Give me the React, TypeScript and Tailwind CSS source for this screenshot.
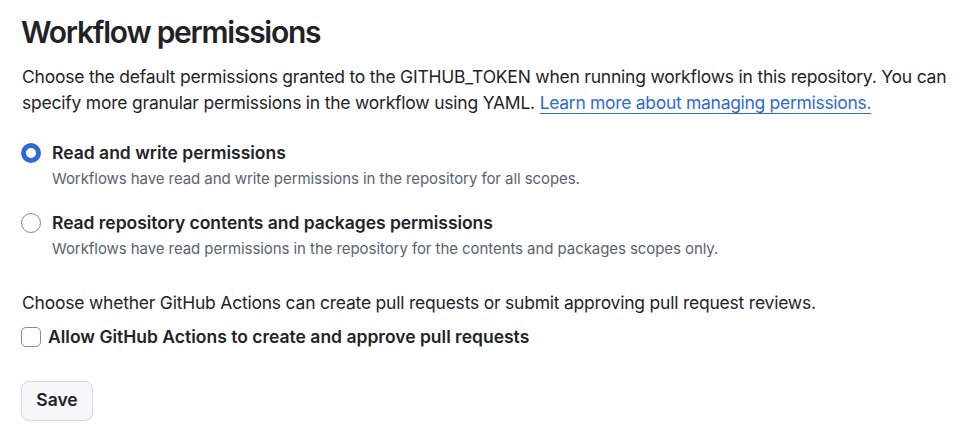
import React from "react";

export default function App() {
  return (
    <div className="min-h-screen bg-white pl-[21px] pr-4 pt-[14px] text-[#1f2328] font-['Inter','Noto_Sans',sans-serif]">
      <h2 className="text-[30px] leading-[37.5px] font-semibold tracking-[-1.25px]">Workflow permissions</h2>
      <p className="mt-[12px] text-[17.5px] leading-[26.25px] pl-[1px] tracking-[-0.22px] whitespace-nowrap">
        Choose the default permissions granted to the GITHUB_TOKEN when running workflows in this repository. You can
        <br />
        specify more granular permissions in the workflow using YAML.{" "}
        <a href="#" className="text-[#2f6ad6] underline underline-offset-[4px] decoration-[1.25px] tracking-[-0.3px]">
          Learn more about managing permissions.
        </a>
      </p>

      <div className="mt-[24px]">
        <div className="flex items-center">
          <span className="w-[20px] h-[20px] rounded-full border-[5.5px] border-[#2f6ad6] bg-white shrink-0" />
          <span className="ml-[11px] text-[17.5px] leading-[26.25px] font-semibold">Read and write permissions</span>
        </div>
        <div className="mt-[2px] pl-[31px] text-[15px] leading-[22.5px] text-[#59636e] tracking-[-0.07px]">
          Workflows have read and write permissions in the repository for all scopes.
        </div>
      </div>

      <div className="mt-[19px]">
        <div className="flex items-center">
          <span className="w-[20px] h-[20px] rounded-full border-[1.25px] border-[#818b98] bg-white shrink-0" />
          <span className="ml-[11px] text-[17.5px] leading-[26.25px] font-semibold tracking-[-0.05px]">
            Read repository contents and packages permissions
          </span>
        </div>
        <div className="mt-[2px] pl-[31px] text-[15px] leading-[22.5px] text-[#59636e] tracking-[-0.07px]">
          Workflows have read permissions in the repository for the contents and packages scopes only.
        </div>
      </div>

      <p className="mt-[29.5px] text-[17.5px] leading-[26.25px] pl-[1px] tracking-[-0.22px]">
        Choose whether GitHub Actions can create pull requests or submit approving pull request reviews.
      </p>

      <div className="mt-[8px] flex items-center">
        <span className="w-[20px] h-[20px] rounded-[5px] border-[1.25px] border-[#818b98] bg-white shrink-0" />
        <span className="ml-[7px] text-[17.5px] leading-[26.25px] font-semibold">
          Allow GitHub Actions to create and approve pull requests
        </span>
      </div>

      <button className="mt-[30px] w-[72px] h-[40px] rounded-[8px] border border-[#d1d9e0] bg-[#f6f8fa] text-[17.5px] font-semibold text-[#1f2328] flex items-center justify-center">
        Save
      </button>
    </div>
  );
}
